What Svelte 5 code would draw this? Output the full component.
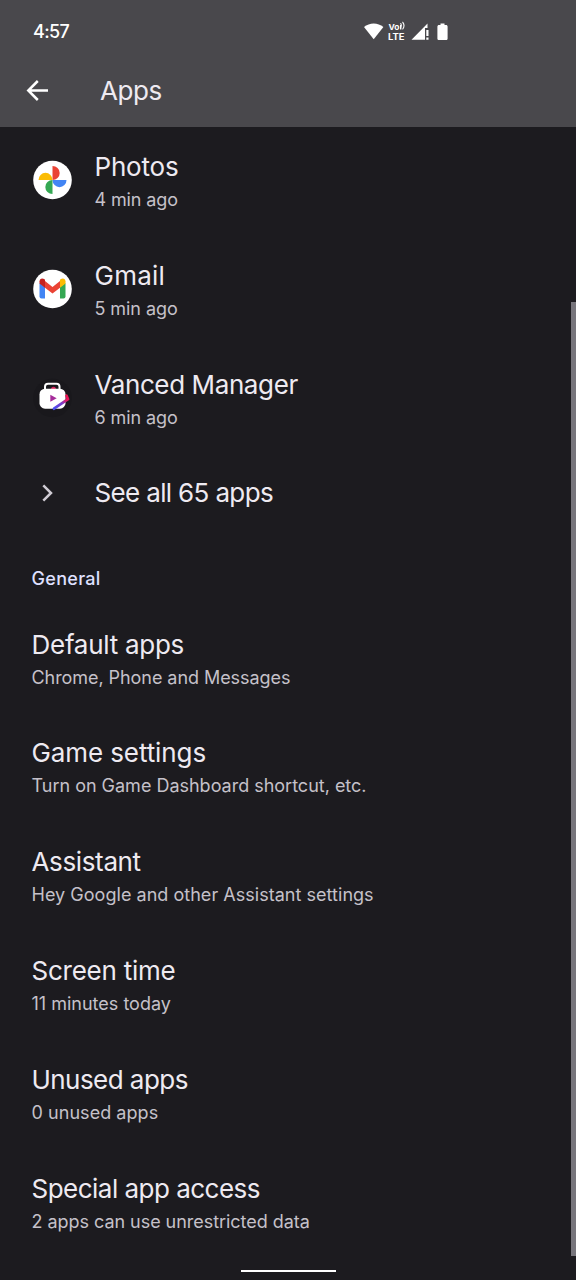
<script>
  const recent = [
    { icon: 'photos', title: 'Photos', track: -0.2, note: '4 min ago', noteTrack: -0.12 },
    { icon: 'gmail', title: 'Gmail', track: 0.25, note: '5 min ago', noteTrack: -0.07 },
    { icon: 'vanced', title: 'Vanced Manager', track: -0.39, note: '6 min ago', noteTrack: -0.09 }
  ];

  const general = [
    { title: 'Default apps', track: -0.27, note: 'Chrome, Phone and Messages', noteTrack: -0.06 },
    { title: 'Game settings', track: -0.1, note: 'Turn on Game Dashboard shortcut, etc.', noteTrack: -0.01 },
    { title: 'Assistant', track: -0.36, note: 'Hey Google and other Assistant settings', noteTrack: 0.03 },
    { title: 'Screen time', track: -0.24, note: '11 minutes today', noteTrack: 0 },
    { title: 'Unused apps', track: -0.55, note: '0 unused apps', noteTrack: 0.05 },
    { title: 'Special app access', track: -0.52, note: '2 apps can use unrestricted data', noteTrack: -0.04 }
  ];
</script>

{#snippet label(item)}
  <div class="label">
    <div class="title" style="letter-spacing:{item.track}px">{item.title}</div>
    <div class="note" style="letter-spacing:{item.noteTrack}px">{item.note}</div>
  </div>
{/snippet}

<div class="screen">
  <header>
    <div class="status">
      <span class="clock">4:57</span>
      <svg class="signals" width="86" height="22" viewBox="0 0 86 22" fill="#fff">
        <path d="M0 6.900C2.800 4.600 6.200 3.400 9.700 3.400s6.900 1.200 9.700 3.500L9.700 19.300z" />
        <g fill="none" stroke="#fff" stroke-width="1.1" stroke-linecap="round">
          <path d="M36.800 3.500q1.200 1.600 0 3.600M38.800 2.300q2.400 3.200 0 6.700" />
        </g>
        <text x="24.500" y="9.600" font-size="8" textLength="11" lengthAdjust="spacingAndGlyphs">Vo</text>
        <path d="M36 5h1.400v4.600H36z" />
        <text x="24" y="20" font-size="8.500" textLength="16.500" lengthAdjust="spacingAndGlyphs">LTE</text>
        <path d="M47.500 19.700 63.500 3.500v4.500h-2.500v11.700z" />
        <path d="M62.300 10h2.200v6h-2.200zM62.300 17.500h2.200v2.200h-2.200z" />
        <path d="M76.500 3.500h4v1.600H82c.9 0 1.600.7 1.600 1.600v11.800c0 .9-.7 1.600-1.600 1.600h-7c-.9 0-1.600-.7-1.600-1.600V6.700c0-.9.700-1.600 1.600-1.600h1.500z" />
      </svg>
    </div>
    <div class="bar">
      <svg width="22" height="22" viewBox="0 0 22 22" fill="none" stroke="#fff" stroke-width="2.500">
        <path d="M22 10.500H2.200M11.800 1 2.300 10.500l9.500 9.500" />
      </svg>
      <h1>Apps</h1>
    </div>
  </header>

  <main>
    {#each recent as item}
      <section class="row">
        <div class="icon">
          {#if item.icon === 'photos'}
            <svg width="40" height="40" viewBox="0 0 40 40">
              <circle cx="20.500" cy="20" r="19.300" fill="#fff" />
              <path d="M20.500 6a7.200 7 0 0 1 0 14z" fill="#ea4335" />
              <path d="M34.500 20a7 7.200 0 0 1-14 0z" fill="#4285f4" />
              <path d="M20.500 34a7.200 7 0 0 1 0-14z" fill="#34a853" />
              <path d="M6.500 20a7 7.200 0 0 1 14 0z" fill="#fbbc04" />
            </svg>
          {:else if item.icon === 'gmail'}
            <svg width="40" height="40" viewBox="0 0 40 40">
              <circle cx="20.500" cy="20" r="19.300" fill="#fff" />
              <g transform="translate(.5 -.5)">
                <path d="M7 14.500l5.500 4V30H9a2 2 0 0 1-2-2z" fill="#4285f4" />
                <path d="M33 14.500l-5.500 4V30H31a2 2 0 0 0 2-2z" fill="#34a853" />
                <path d="M12.500 12.500 20 18.500l7.500-6v6.800L20 25l-7.500-5.700z" fill="#ea4335" />
                <path d="M7 15v-2.200c0-2.500 2.600-3.700 4.600-2.200l.9.700v8z" fill="#c5221f" />
                <path d="M33 15v-2.200c0-2.500-2.600-3.700-4.600-2.200l-.9.700v8z" fill="#fbbc04" />
              </g>
            </svg>
          {:else}
            <svg width="40" height="40" viewBox="0 0 40 40">
              <defs>
                <linearGradient id="slash" x1="0" y1="1" x2="1" y2="0">
                  <stop offset="0" stop-color="#4a4ff0" />
                  <stop offset=".5" stop-color="#7a3bc8" />
                  <stop offset=".75" stop-color="#e01865" />
                  <stop offset="1" stop-color="#f0144f" />
                </linearGradient>
              </defs>
              <circle cx="20.500" cy="20" r="19.300" fill="#19181c" />
              <g transform="translate(0 -.8)">
                <path d="M13 13V9.500q0-3 3-3h8.500q3 0 3 3V13" fill="none" stroke="#fff" stroke-width="2" />
                <path d="M19 12a2.500 2.500 0 0 1 5 0z" fill="#d4235d" />
                <rect x="7.500" y="11.500" width="26" height="20" rx="5.500" fill="#fff" />
                <path d="M18.300 17.500v7l6.400-3.500z" fill="#a52c9a" />
                <path d="M34.500 18.500l1.500 3.500L22 31.500" fill="none" stroke="url(#slash)" stroke-width="2.800" stroke-linejoin="round" stroke-linecap="round" />
              </g>
            </svg>
          {/if}
        </div>
        {@render label(item)}
      </section>
    {/each}

    <section class="see-all">
      <div class="icon">
        <svg width="40" height="40" viewBox="0 0 40 40" fill="none" stroke="#d0ccd4" stroke-width="2.500">
          <path d="M11.300 12.300 19 20l-7.700 7.700" />
        </svg>
      </div>
      <div class="title" style="letter-spacing:-0.65px">See all 65 apps</div>
    </section>

    <h2>General</h2>

    {#each general as item}
      <section class="row">{@render label(item)}</section>
    {/each}
  </main>

  <div class="scrollbar"></div>
  <div class="home"></div>
</div>

<style>
  :global(body) {
    margin: 0;
    background: #1c1b1f;
  }
  .screen {
    position: relative;
    box-sizing: border-box;
    width: 576px;
    height: 1280px;
    overflow: hidden;
    background: #1c1b1f;
    color: #eeeaf1;
    font-family: Inter, Roboto, sans-serif;
  }
  header {
    height: 127px;
    background: #49484c;
  }
  .status {
    display: flex;
    align-items: center;
    justify-content: space-between;
    height: 62px;
    padding: 0 126px 0 33px;
  }
  .clock {
    color: #fff;
    font-size: 18px;
    font-weight: 500;
    letter-spacing: -0.6px;
  }
  .signals text {
    font-family: Inter, sans-serif;
    font-weight: 700;
  }
  .bar {
    display: flex;
    align-items: center;
    gap: 52px;
    height: 57px;
    padding-left: 26px;
  }
  h1 {
    margin: 0;
    font-size: 26px;
    font-weight: 370;
    letter-spacing: -0.4px;
  }
  main {
    padding-top: 2.6px;
  }
  .row {
    display: flex;
    align-items: center;
    height: 108.8px;
    padding-left: 31.5px;
  }
  .icon {
    display: flex;
    width: 63px;
    padding-left: 0.5px;
    box-sizing: border-box;
  }
  .row .icon {
    padding-bottom: 8px;
  }
  .label {
    padding-bottom: 1.6px;
  }
  .title,
  .note {
    white-space: nowrap;
  }
  .title {
    font-size: 26px;
    font-weight: 370;
    line-height: 33px;
  }
  .note {
    color: #c5c1c9;
    font-size: 18px;
    line-height: 33px;
  }
  .see-all {
    display: flex;
    align-items: center;
    height: 74px;
    padding-left: 31.5px;
  }
  .see-all .title {
    padding-bottom: 1px;
  }
  h2 {
    height: 77px;
    margin: 0;
    padding: 32.5px 0 0 31.5px;
    box-sizing: border-box;
    color: #dfe0ff;
    font-size: 18px;
    font-weight: 500;
    line-height: 33px;
    letter-spacing: 0.3px;
  }
  .scrollbar {
    position: absolute;
    top: 302px;
    right: 0;
    width: 5px;
    height: 954px;
    background: #77757c;
  }
  .home {
    position: absolute;
    top: 1270px;
    left: 241px;
    width: 95px;
    height: 2px;
    background: #fff;
  }
</style>
